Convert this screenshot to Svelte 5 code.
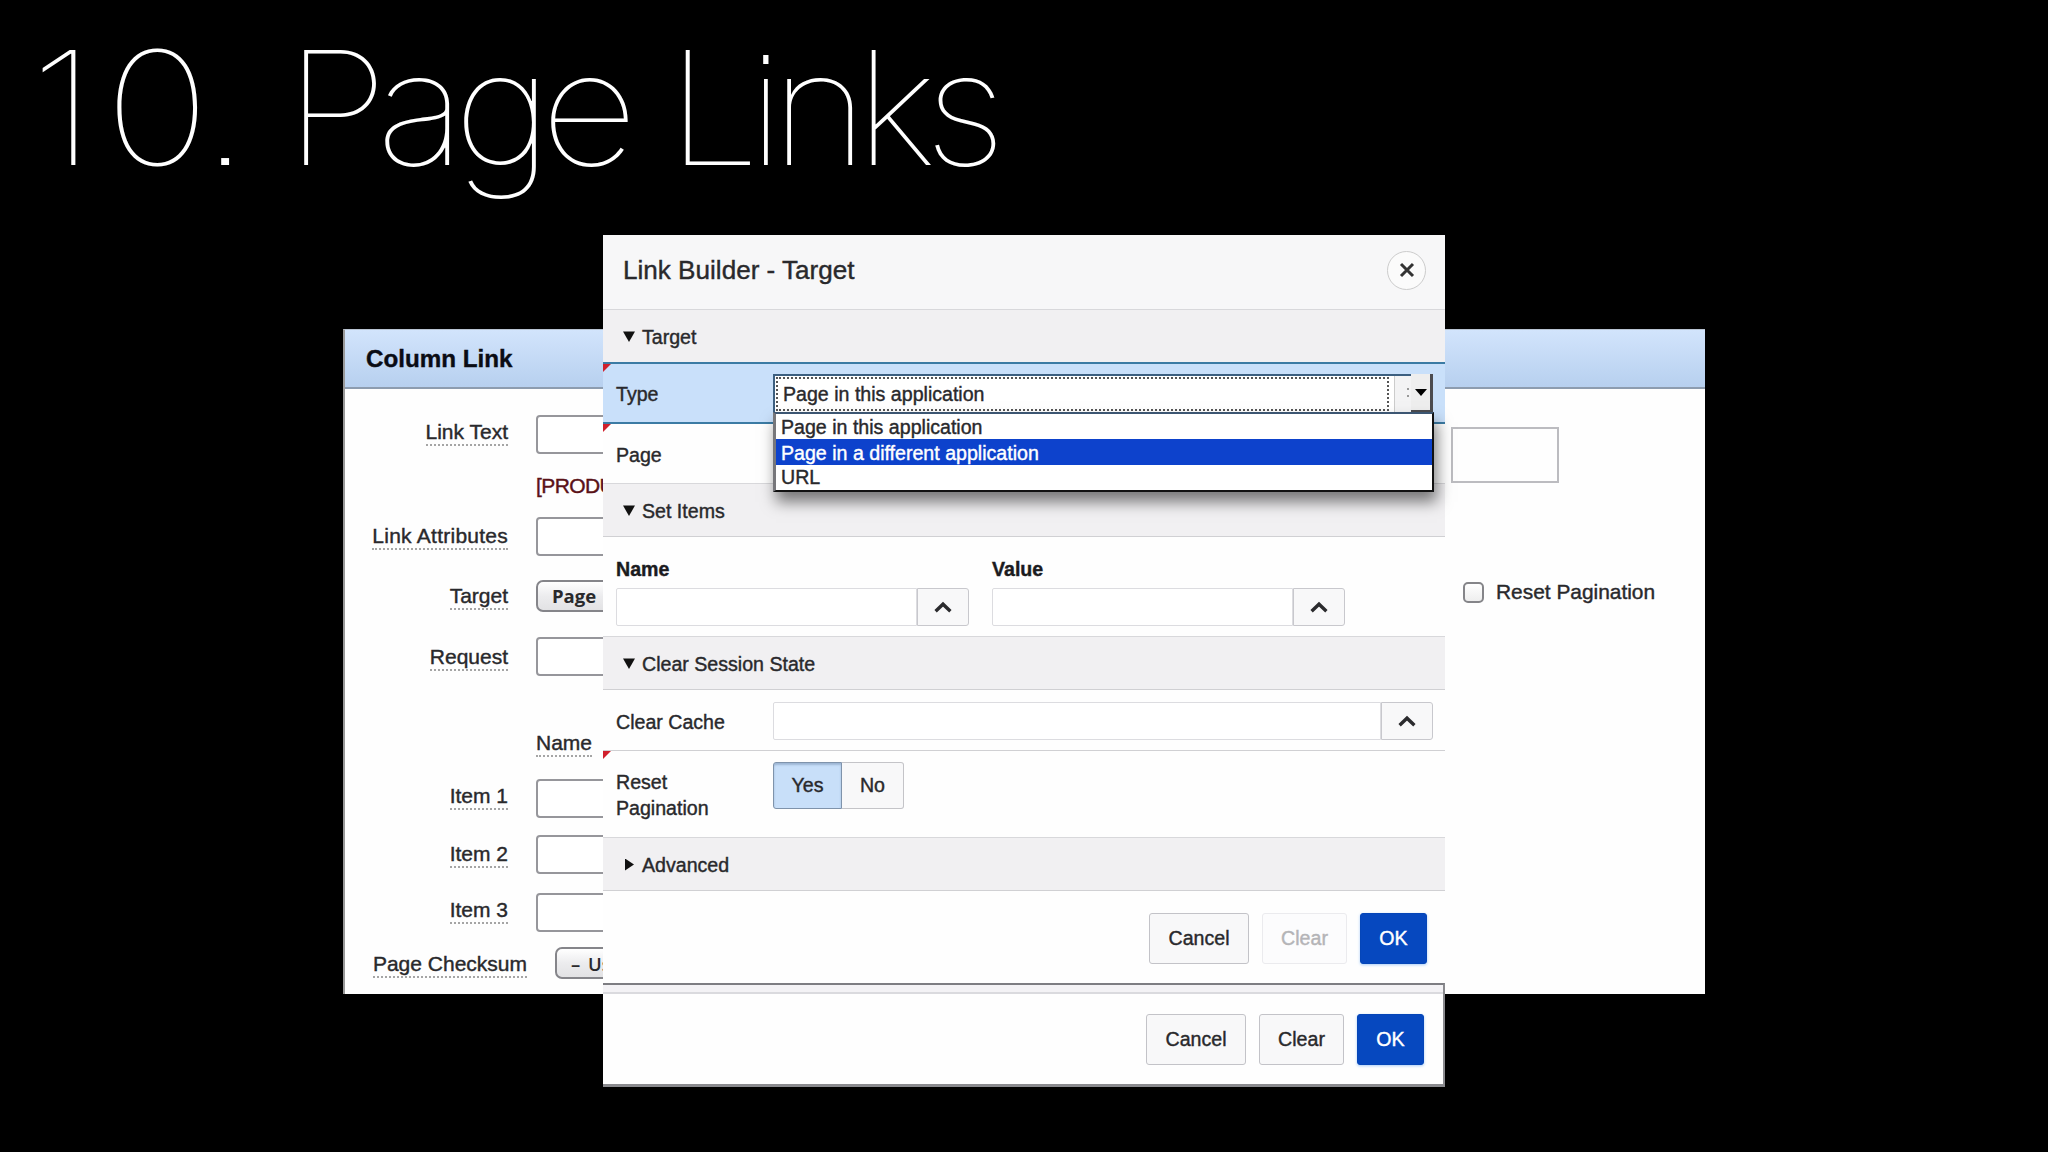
<script lang="ts">
  interface Field {
    label: string;
    kind: "text" | "menu" | "note" | "heading";
    value?: string;
    row: string;
  }

  const fields: Field[] = [
    { label: "Link Text", kind: "text", row: "link-text" },
    { label: "", kind: "note", value: "[PRODUCT_NAME]", row: "note" },
    { label: "Link Attributes", kind: "text", row: "attributes" },
    { label: "Target", kind: "menu", value: "Page in this", row: "target" },
    { label: "Request", kind: "text", row: "request" },
    { label: "", kind: "heading", value: "Name", row: "heading" },
    { label: "Item 1", kind: "text", row: "item-1" },
    { label: "Item 2", kind: "text", row: "item-2" },
    { label: "Item 3", kind: "text", row: "item-3" },
    { label: "Page Checksum", kind: "menu", value: "– Use", row: "checksum" },
  ];

  const linkTypes = ["Page in this application", "Page in a different application", "URL"];

  let highlighted = $state(1);
  let resetPagination = $state(true);
</script>

{#snippet popupField(size: string)}
  <div class="popup-field {size}">
    <input type="text" />
    <button type="button" aria-label="Open list">
      <svg width="18" height="12" viewBox="0 0 18 12">
        <path d="M1.6 10.2 L9 3.2 L16.4 10.2" fill="none" stroke="#2b2b2e" stroke-width="3.4" />
      </svg>
    </button>
  </div>
{/snippet}

{#snippet section(title: string, open: boolean)}
  <div class="section">
    <svg width="12" height="12" viewBox="0 0 12 12">
      {#if open}
        <path d="M0 0.5 H12 L6 11 Z" fill="#111" />
      {:else}
        <path d="M2 -0.5 L11 5.5 L2 11.5 Z" fill="#111" />
      {/if}
    </svg>
    <span>{title}</span>
  </div>
{/snippet}

{#snippet actions(clearDisabled: boolean)}
  <button type="button" class="btn cancel">Cancel</button>
  <button type="button" class="btn clear" disabled={clearDisabled}>Clear</button>
  <button type="button" class="btn ok">OK</button>
{/snippet}

<div class="slide">
  <h1><span class="w1">1<em>0</em>.</span><span class="w2">Page</span><span class="w3">Links</span></h1>

  <section class="panel">
    <h2>Column Link</h2>
    <div class="panel-body">
      <div class="form">
        {#each fields as field}
          <div class="field {field.row}">
            <div class="label">
              {#if field.label}<span>{field.label}</span>{/if}
            </div>
            {#if field.kind === "text"}
              <input type="text" />
            {:else if field.kind === "menu"}
              <div class="menu">{field.value}</div>
            {:else if field.kind === "note"}
              <div class="note-text">{field.value}</div>
            {:else}
              <span class="dotted">{field.value}</span>
            {/if}
          </div>
        {/each}
      </div>
      <div class="aside">
        <div class="box"></div>
        <div class="check"><i></i><span>Reset Pagination</span></div>
      </div>
    </div>
  </section>

  <div class="dialog">
    <header>
      <span>Link Builder - Target</span>
      <button type="button" class="close" aria-label="Close">
        <svg width="16" height="16" viewBox="0 0 16 16">
          <path d="M2 2 L14 14 M14 2 L2 14" stroke="#333" stroke-width="3" />
        </svg>
      </button>
    </header>

    {@render section("Target", true)}
    <div class="row type required">
      <span class="name">Type</span>
      <div class="select">
        <div class="current"><span>{linkTypes[0]}</span></div>
        <div class="grip"></div>
        <div class="arrow">
          <svg width="12" height="7" viewBox="0 0 12 7"><path d="M0 0 H12 L6 7 Z" fill="#000" /></svg>
        </div>
        <ul>
          {#each linkTypes as type, i}
            <li class:active={i === highlighted}>{type}</li>
          {/each}
        </ul>
      </div>
    </div>
    <div class="row page required"><span class="name">Page</span></div>

    {@render section("Set Items", true)}
    <div class="items">
      <div><b>Name</b>{@render popupField("short")}</div>
      <div><b>Value</b>{@render popupField("short")}</div>
    </div>

    {@render section("Clear Session State", true)}
    <div class="row cache"><span class="name">Clear Cache</span>{@render popupField("long")}</div>
    <div class="row reset required">
      <span class="name">Reset Pagination</span>
      <div class="toggle">
        <button type="button" class="yes" class:on={resetPagination} onclick={() => (resetPagination = true)}>Yes</button>
        <button type="button" class="no" class:on={!resetPagination} onclick={() => (resetPagination = false)}>No</button>
      </div>
    </div>

    {@render section("Advanced", false)}
    <footer class="first">{@render actions(true)}</footer>
    <footer class="second">
      <div class="strip"></div>
      <div class="bar">{@render actions(false)}</div>
    </footer>
  </div>
</div>

<style>
  :global(body) {
    background: #000;
  }

  .slide {
    position: relative;
    width: 2048px;
    height: 1152px;
    overflow: hidden;
    background: #000;
    font-family: "Liberation Sans", Arial, sans-serif;
    font-size: 19.6px;
    color: #29292c;
    -webkit-text-stroke: 0.4px currentColor;
  }

  .slide * {
    box-sizing: border-box;
  }

  button,
  input {
    font: inherit;
    color: inherit;
    margin: 0;
    padding: 0;
    outline: none;
    -webkit-text-stroke: inherit;
  }

  h1 {
    display: flex;
    margin: 0;
    padding: 12px 0 0 30px;
    font-family: Inter, Roboto, sans-serif;
    font-feature-settings: "ss07";
    font-weight: 100;
    font-size: 158px;
    line-height: 192px;
    color: #fff;
    white-space: nowrap;
    -webkit-text-stroke: 0;
  }

  h1 span {
    flex: none;
    transform-origin: left;
  }

  h1 em {
    margin-left: 8px;
    font-style: normal;
    letter-spacing: -8px;
  }

  .w1 {
    width: 255px;
    transform: scaleX(1.13);
  }

  .w2 {
    width: 382px;
    letter-spacing: -11px;
    transform: scaleX(1.075);
  }

  .w3 {
    letter-spacing: -11.8px;
    transform: scaleX(1.05);
  }

  /* Page behind the dialog */
  .panel {
    position: absolute;
    left: 343px;
    top: 329px;
    width: 1362px;
    height: 665px;
    background: #fefefe;
    border-left: 2px solid #999;
    border-top: 1px solid #b9c4d2;
    font-size: 21px;
    overflow: hidden;
  }

  .panel h2 {
    height: 59px;
    margin: 0;
    padding-left: 21px;
    border-bottom: 2px solid #8d9caf;
    background: linear-gradient(#d2e4fc, #b7d0ef);
    font-size: 24.2px;
    line-height: 58px;
    color: #0a0c14;
  }

  .panel-body {
    display: flex;
    justify-content: space-between;
  }

  .form {
    width: 280px;
    padding-top: 26px;
  }

  .field {
    display: flex;
    align-items: flex-start;
    white-space: nowrap;
  }

  .label {
    flex: none;
    width: 163px;
    margin-right: 28px;
    text-align: right;
  }

  .label span,
  .dotted {
    display: inline-block;
    line-height: 24px;
    border-bottom: 2px dotted #a5a5a5;
  }

  .field input {
    flex: none;
    width: 200px;
    height: 39px;
    border: 2px solid #96969b;
    border-radius: 4px;
    background: #fff;
  }

  .menu {
    flex: none;
    width: 200px;
    height: 32px;
    padding-left: 14px;
    border: 2px solid #85858a;
    border-radius: 7px;
    background: linear-gradient(#fff, #ececee 50%, #e2e2e4);
    font-family: "Open Sans", sans-serif;
    font-size: 18.5px;
    font-weight: 700;
    line-height: 28px;
    word-spacing: 3px;
    -webkit-text-stroke: 0;
  }

  .link-text { height: 58px; }
  .link-text .label { padding-top: 5px; }
  .note { height: 44px; }
  .note-text { line-height: 25px; letter-spacing: -0.6px; color: #5a1218; }
  .attributes { height: 63px; }
  .attributes .label { padding-top: 7px; letter-spacing: 0.25px; }
  .target { height: 57px; }
  .target .label { padding-top: 4px; }
  .request { height: 94px; }
  .request .label { padding-top: 8px; }
  .heading { height: 48px; }
  .item-1 { height: 56px; }
  .item-1 .label { padding-top: 5px; }
  .item-2 { height: 58px; }
  .item-2 .label { padding-top: 7px; }
  .item-3 { height: 54px; }
  .item-3 .label { padding-top: 5px; }
  .checksum .label { width: 182px; padding-top: 5px; }
  .checksum .menu { font-weight: 600; line-height: 29px; }

  .aside {
    width: 254px;
    padding-top: 38px;
  }

  .box {
    width: 108px;
    height: 56px;
    border: 2px solid #bcbcc0;
  }

  .check {
    display: flex;
    align-items: center;
    gap: 12px;
    margin-top: 97px;
    padding-left: 12px;
    font-size: 20.9px;
    line-height: 24px;
    white-space: nowrap;
  }

  .check i {
    width: 21px;
    height: 21px;
    border: 2px solid #858589;
    border-radius: 5px;
    background: linear-gradient(#fff, #eee);
  }

  /* Dialog */
  .dialog {
    position: absolute;
    left: 603px;
    top: 235px;
    width: 842px;
    height: 852px;
    background: #fefefe;
  }

  header {
    display: flex;
    align-items: center;
    justify-content: space-between;
    height: 74px;
    padding: 0 19px 4px 20px;
    background: #f7f7f8;
    font-size: 26.1px;
  }

  .close {
    display: grid;
    place-items: center;
    width: 39px;
    height: 39px;
    border: 1.5px solid #ccc;
    border-radius: 50%;
    background: #fbfbfb;
  }

  .section {
    display: flex;
    align-items: center;
    gap: 7px;
    height: 54px;
    padding: 2px 0 0 20px;
    border-top: 1px solid #d8d8db;
    border-bottom: 1px solid #d0d0d3;
    background: #f1f0f2;
  }

  header + .section {
    height: 53px;
    border-bottom: none;
  }

  .row {
    position: relative;
    display: flex;
    padding-left: 13px;
  }

  .required::before {
    content: "";
    position: absolute;
    left: 0;
    top: 0;
    border-top: 8px solid #d0202c;
    border-right: 8px solid transparent;
  }

  .name {
    width: 157px;
    flex: none;
  }

  .type {
    height: 62px;
    border-top: 2px solid #3b7ba4;
    border-bottom: 2px solid #3b7ba4;
    background: #c9e0fa;
    line-height: 61px;
  }

  .select {
    position: relative;
    display: flex;
    width: 660px;
    height: 40px;
    margin-top: 10px;
    border: 2px solid #3c5f80;
    border-right: none;
    background: #fff;
  }

  .current {
    flex: 1;
    margin: 1px 5px 1px 1px;
    padding-left: 5px;
    border: 2px dotted #555;
    line-height: 31px;
  }

  .grip {
    width: 17px;
    border-left: 1px solid #ccc;
    background: radial-gradient(circle, #999 1px, transparent 1.5px) 10px 10px / 6px 6px no-repeat,
      radial-gradient(circle, #999 1px, transparent 1.5px) 10px 17px / 6px 6px no-repeat, #f3f3f4;
  }

  .arrow {
    display: grid;
    place-items: center;
    width: 22px;
    margin: -2px 0 -1px;
    border-right: 3px solid #4c4c50;
    border-bottom: 3px solid #4c4c50;
    background: #eee;
  }

  ul {
    position: absolute;
    z-index: 2;
    left: -2px;
    top: 36px;
    width: 661px;
    height: 80px;
    margin: 0;
    padding: 0;
    border: 2px solid #111;
    border-left: 3px solid #77777b;
    border-top-color: #3c5672;
    background: #fff;
    box-shadow: 3px 10px 14px rgba(0, 0, 0, 0.5);
    list-style: none;
  }

  li {
    height: 25px;
    padding-left: 5px;
    line-height: 25px;
  }

  li:first-child {
    line-height: 26px;
  }

  li.active {
    height: 26px;
    background: #0d42cc;
    color: #fff;
    line-height: 28px;
  }

  .page {
    height: 59px;
    line-height: 63px;
  }

  .items {
    display: flex;
    gap: 23px;
    height: 99px;
    padding: 19px 0 0 13px;
  }

  .items b {
    display: block;
    height: 32px;
    line-height: 26px;
    color: #1b1b1e;
  }

  .popup-field {
    display: flex;
    height: 38px;
  }

  .popup-field input {
    flex: 1;
    min-width: 0;
    border: 1px solid #dcdce0;
    border-radius: 2px 0 0 2px;
    background: #fff;
  }

  .popup-field button {
    display: grid;
    place-items: center;
    width: 52px;
    border: 1.5px solid #c8c8cd;
    border-radius: 0 3px 3px 0;
    background: #f8f8f9;
  }

  .short {
    width: 353px;
  }

  .long {
    width: 660px;
    margin-top: 12px;
  }

  .cache {
    height: 60px;
    line-height: 64px;
  }

  .reset {
    height: 87px;
    padding-top: 11px;
    border-top: 1px solid #d0d0d3;
    line-height: 26px;
  }

  .reset .name {
    width: 110px;
    margin-right: 47px;
    padding-top: 7px;
  }

  .toggle {
    display: flex;
    height: 47px;
  }

  .toggle button {
    padding-bottom: 1px;
    border: 1px solid #c4c4c8;
    border-radius: 0 3px 3px 0;
    background: #f8f8f9;
  }

  .toggle .yes {
    width: 69px;
    border-radius: 3px 0 0 3px;
  }

  .toggle .no {
    width: 62px;
    border-left: none;
  }

  .toggle .on {
    border: 1px solid #7f93ab;
    background: #c8dff9;
    box-shadow: inset 0 2px 2px rgba(60, 90, 130, 0.3);
  }

  footer {
    display: flex;
  }

  .first {
    justify-content: flex-end;
    gap: 13px;
    height: 92px;
    padding: 22px 18px 0 0;
  }

  .second {
    flex-direction: column;
    height: 104px;
    border-top: 2px solid #7d7d82;
    border-right: 2px solid #8a8a8e;
    border-bottom: 3px solid #8a8a8e;
  }

  .strip {
    height: 9px;
    border-bottom: 2px solid #dadade;
    background: #f3f2f5;
  }

  .bar {
    display: flex;
    justify-content: flex-end;
    gap: 13px;
    padding: 20px 19px 0 0;
  }

  .btn {
    height: 51px;
    border: 1.5px solid #c3c3c8;
    border-radius: 3px;
    background: #f8f8f9;
  }

  .cancel {
    width: 100px;
  }

  .clear {
    width: 85px;
  }

  .clear:disabled {
    border-color: #ebebee;
    background: #fcfcfd;
    color: #b4b4b7;
  }

  .ok {
    width: 67px;
    border-color: #0546b8;
    background: #0648bf;
    color: #fff;
    box-shadow: 0 1px 3px #a9cdf8;
  }
</style>
